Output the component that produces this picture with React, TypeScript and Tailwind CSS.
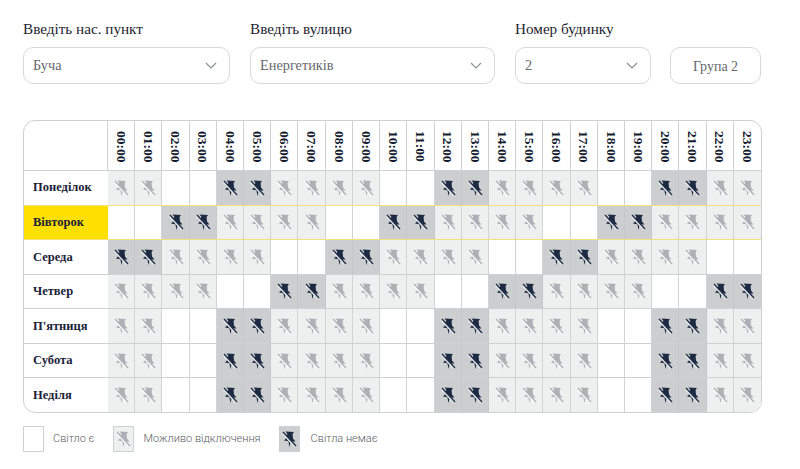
const hours = Array.from({ length: 24 }, (_, i) => `${String(i).padStart(2, '0')}:00`);

// y = svitla nemae, m = mozhlyvo, n = svitlo ye; each letter covers two hours
const days = [
  { name: 'Понеділок', plan: 'mnymmnymmnym' },
  { name: 'Вівторок', plan: 'nymmnymmnymm' },
  { name: 'Середа', plan: 'ymmnymmnymmn' },
  { name: 'Четвер', plan: 'mmnymmnymmny' },
  { name: "П'ятниця", plan: 'mnymmnymmnym' },
  { name: 'Субота', plan: 'mnymmnymmnym' },
  { name: 'Неділя', plan: 'mnymmnymmnym' },
];

function PinOff({ dark }: { dark: boolean }) {
  const color = dark ? '#1c2a44' : '#adb0b5';
  return (
    <svg width="18" height="20" viewBox="0 0 18 20" fill="none">
      <path d="M5.5 2.5 L14 3 L12.6 5 L13 9.5 L15.5 12.5 L10.8 12.5 L9.5 18 L8.4 12.2 L4 11.5 L6.8 8.5 L7.2 4.5 Z" fill={color} />
      <path d="M2.6 4 L15 17.6" stroke={dark ? '#e4e5e6' : '#f8f9f9'} strokeWidth="2.2" />
      <path d="M3 3 L16 17" stroke={color} strokeWidth="1.3" />
    </svg>
  );
}

function Select({ label, value, className }: { label: string; value: string; className: string }) {
  return (
    <div className={className}>
      <div className="mb-[9px] text-[15.2px] leading-[18px] text-[#1e2530]">{label}</div>
      <div className="flex h-[37px] items-center justify-between rounded-[10px] border border-[#d8d8da] pl-[9px] pr-[12px] text-[14.3px] text-[#66686c]">
        <span>{value}</span>
        <svg width="12" height="7" viewBox="0 0 12 7" fill="none">
          <path d="M1 1 L6 6 L11 1" stroke="#8b8e93" strokeWidth="1.2" />
        </svg>
      </div>
    </div>
  );
}

function Cell({ state, last }: { state: string; last: boolean }) {
  const bg = state === 'y' ? 'bg-[#cdcecf]' : state === 'm' ? 'bg-[#eeefef]' : 'bg-white';
  const border = state === 'y' ? 'border-[#c6c7c9]' : 'border-[#d2d3d4]';
  return (
    <div className={`flex items-center justify-center ${bg} ${last ? '' : `border-r ${border}`}`}>
      {state !== 'n' && <PinOff dark={state === 'y'} />}
    </div>
  );
}

export default function App() {
  return (
    <div className="h-[469px] w-[800px] overflow-hidden bg-white px-[23px] pt-[20px] font-['Liberation_Serif',serif]">
      <div className="flex items-end">
        <Select label="Введіть нас. пункт" value="Буча" className="w-[207px]" />
        <Select label="Введіть вулицю" value="Енергетиків" className="ml-[20px] w-[245px]" />
        <Select label="Номер будинку" value="2" className="ml-[20px] w-[136px]" />
        <div className="ml-[19px] flex h-[37px] w-[91px] items-center justify-center rounded-[10px] border border-[#d8d8da] pt-[2px] text-[14px] text-[#66686c]">
          Група 2
        </div>
      </div>

      <div className="mt-[36px] grid h-[293px] w-[739px] grid-cols-[84px_repeat(24,1fr)] grid-rows-[49px_repeat(7,1fr)] overflow-hidden rounded-[12px] border border-[#cfd0d2]">
        <div className="border-r border-[#cfd0d2]" />
        {hours.map((h, i) => (
          <div key={h} className={`flex justify-center pt-[10px] ${i < 23 ? 'border-r border-[#cfd0d2]' : ''}`}>
            <span className="text-[13.5px] font-bold leading-none text-[#141b2e] [writing-mode:vertical-rl]">{h}</span>
          </div>
        ))}
        {days.map((d, row) => {
          // yellow lines above and below the current day
          const line = row === 1 || row === 2 ? 'border-[#f2e27c]' : 'border-[#cfd0d2]';
          return (
            <div key={d.name} className="contents">
              <div
                className={`flex items-center border-t pl-[9px] text-[12.5px] font-bold text-[#1a2238] ${line} ${
                  row === 1 ? 'bg-[#ffe000]' : ''
                }`}
              >
                {d.name}
              </div>
              {hours.map((h, i) => (
                <div key={h} className={`grid border-t ${line}`}>
                  <Cell state={d.plan[Math.floor(i / 2)]} last={i === 23} />
                </div>
              ))}
            </div>
          );
        })}
      </div>

      <div className="mt-[13px] flex items-center font-['Roboto',sans-serif] text-[11px] font-light text-[#5b5e63]">
        <div className="h-[26px] w-[21px] border border-[#cfd0d2]" />
        <span className="ml-[9px]">Світло є</span>
        <div className="ml-[18px] flex h-[26px] w-[21px] items-center justify-center border border-[#cfd0d2] bg-[#eeefef]">
          <PinOff dark={false} />
        </div>
        <span className="ml-[10px]">Можливо відключення</span>
        <div className="ml-[18px] flex h-[26px] w-[21px] items-center justify-center bg-[#cdcecf]">
          <PinOff dark />
        </div>
        <span className="ml-[11px]">Світла немає</span>
      </div>
    </div>
  );
}
